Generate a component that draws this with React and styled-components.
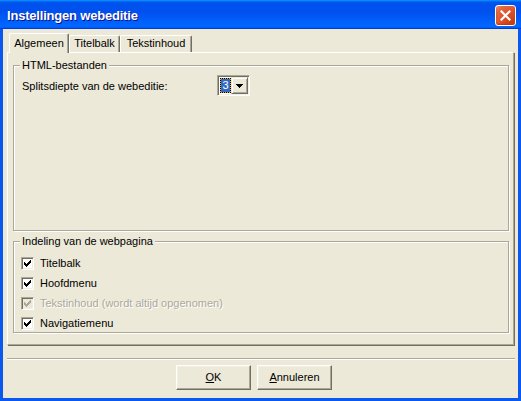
import React from "react";
import styled, { createGlobalStyle } from "styled-components";

const GlobalStyle = createGlobalStyle`
  html, body {
    margin: 0;
    padding: 0;
    background: #fff;
  }
  body {
    font-family: "Liberation Sans", Arial, sans-serif;
    font-size: 11px;
    color: #000;
  }
  * {
    box-sizing: border-box;
  }
`;

const Frame = styled.div`
  width: 521px;
  height: 401px;
  display: flex;
  flex-direction: column;
  background: #0054e3;
`;

const TitleBar = styled.div`
  height: 29px;
  flex: none;
  display: flex;
  align-items: center;
  justify-content: space-between;
  padding: 1px 5px 0 7px;
  background: linear-gradient(
    180deg,
    #0997ff,
    #0053ee 8%,
    #0050ee 40%,
    #06f 88%,
    #06f 93%,
    #005bff 95%,
    #003dd7 96%,
    #003dd7
  );
`;

const Title = styled.span`
  color: #fff;
  font-weight: bold;
  font-size: 13px;
  letter-spacing: -0.2px;
  text-shadow: 1px 1px #0f1089;
`;

const CloseButton = styled.div`
  width: 21px;
  height: 21px;
  border: 1px solid #fff;
  border-radius: 3px;
  display: flex;
  align-items: center;
  justify-content: center;
  background: radial-gradient(
    circle at 85% 85%,
    #c63f16 0%,
    #e0532a 50%,
    #e56a42 80%,
    #f3a285 100%
  );
  box-shadow: inset 0 -1px 2px #b33a10;
`;

const Client = styled.div`
  flex: 1;
  display: flex;
  flex-direction: column;
  background: #ece9d8;
  border: 3px solid #0a58ee;
  border-top: none;
  padding: 4px 4px 0 4px;
`;

const TabStrip = styled.div`
  height: 19px;
  display: flex;
  align-items: flex-start;
  padding-left: 2px;
`;

const Tab = styled.div`
  position: relative;
  z-index: ${(p) => (p.$active ? 1 : 0)};
  width: ${(p) => p.$width}px;
  height: ${(p) => (p.$active ? 20 : 17)}px;
  margin-top: ${(p) => (p.$active ? 0 : 2)}px;
  padding-top: ${(p) => (p.$active ? 3 : 1)}px;
  background: #ece9d8;
  border-top: 1px solid #fff;
  border-left: 1px solid #fff;
  border-right: 1px solid #716f64;
  border-radius: 2px 2px 0 0;
  box-shadow: inset -1px 0 #aca899;
  text-align: center;
  line-height: 13px;
`;

const Panel = styled.div`
  height: 293px;
  flex: none;
  display: flex;
  flex-direction: column;
  gap: 4px;
  padding: 6px 4px 0 5px;
  border-top: 1px solid #fff;
  border-left: 1px solid #fff;
  border-right: 1px solid #aca899;
  border-bottom: 1px solid #aca899;
  box-shadow: 1px 1px 0 #716f64;
`;

const Group = styled.fieldset`
  margin: 0;
  padding: 0;
  height: ${(p) => p.$height}px;
  border: 1px solid #aca899;
  box-shadow: inset 1px 1px 0 #fff, 1px 1px 0 #fff;
  min-width: 0;
`;

const Legend = styled.legend`
  margin-left: 6px;
  padding: 0 2px;
  line-height: 13px;
  background: #ece9d8;
`;

const SettingRow = styled.div`
  display: grid;
  grid-template-columns: 195px auto;
  align-items: center;
  padding: 3px 0 0 8px;
`;

const ComboBox = styled.div`
  width: 33px;
  height: 21px;
  display: flex;
  align-items: center;
  padding: 1px 1px 1px 2px;
  background: #fff;
  border: 1px solid;
  border-color: #aca899 #fff #fff #aca899;
  box-shadow: inset 1px 1px #716f64, inset -1px -1px #f1efe2;
`;

const ComboValue = styled.div`
  width: 11px;
  height: 15px;
  color: #fff;
  text-align: center;
  line-height: 13px;
  border: 1px dotted #000;
  background: linear-gradient(#316ac5, #316ac5) padding-box,
    linear-gradient(#e0a848, #e0a848) border-box;
`;

const DropButton = styled.div`
  width: 17px;
  height: 17px;
  display: flex;
  align-items: center;
  justify-content: center;
  background: #ece9d8;
  border: 1px solid;
  border-color: #ece9d8 #716f64 #716f64 #ece9d8;
  box-shadow: inset 1px 1px #fff, inset -1px -1px #aca899;
`;

const CheckList = styled.div`
  display: flex;
  flex-direction: column;
  padding: 5px 0 0 7px;
`;

const CheckRow = styled.div`
  height: 20px;
  display: flex;
  align-items: center;
  gap: 6px;
  color: ${(p) => (p.$disabled ? "#aca899" : "#000")};
  text-shadow: ${(p) => (p.$disabled ? "1px 1px 0 #fff" : "none")};
`;

const CheckBox = styled.div`
  width: 13px;
  height: 13px;
  flex: none;
  display: flex;
  align-items: center;
  justify-content: center;
  background: ${(p) => (p.$disabled ? "#ece9d8" : "#fff")};
  border: 1px solid;
  border-color: #aca899 #fff #fff #aca899;
  box-shadow: inset 1px 1px #716f64, inset -1px -1px #f1efe2;
`;

const Separator = styled.div`
  height: 2px;
  margin: 13px -1px 0 0;
  border-top: 1px solid #aca899;
  border-bottom: 1px solid #fff;
`;

const ButtonRow = styled.div`
  display: flex;
  gap: 6px;
  margin-top: 5px;
  padding-left: 169px;
`;

const Button = styled.div`
  width: 75px;
  height: 25px;
  display: flex;
  align-items: center;
  justify-content: center;
  background: #ece9d8;
  border: 1px solid;
  border-color: #fff #716f64 #716f64 #fff;
  box-shadow: inset -1px -1px #aca899, inset 1px 1px #f1efe2;
  line-height: 13px;
`;

const checkPath = [2, 3, 4, 3, 2, 1, 0]
  .map((y, x) => `M${x + 1} ${y + 1}h1v3h-1z`)
  .join("");

const Check = ({ color }) => (
  <svg width="9" height="9" viewBox="0 0 9 9" shapeRendering="crispEdges">
    <path d={checkPath} fill={color} />
  </svg>
);

const options = [
  { label: "Titelbalk" },
  { label: "Hoofdmenu" },
  { label: "Tekstinhoud (wordt altijd opgenomen)", disabled: true },
  { label: "Navigatiemenu" },
];

export default function App() {
  return (
    <>
      <GlobalStyle />
      <Frame>
        <TitleBar>
          <Title>Instellingen webeditie</Title>
          <CloseButton>
            <svg width="11" height="11" viewBox="0 0 11 11">
              <path
                d="M1.5 1.5L9.5 9.5M9.5 1.5L1.5 9.5"
                stroke="#fff"
                strokeWidth="2.2"
                strokeLinecap="square"
              />
            </svg>
          </CloseButton>
        </TitleBar>
        <Client>
          <TabStrip>
            <Tab $active $width={60}>Algemeen</Tab>
            <Tab $width={51}>Titelbalk</Tab>
            <Tab $width={72}>Tekstinhoud</Tab>
          </TabStrip>
          <Panel>
            <Group $height={172}>
              <Legend>HTML-bestanden</Legend>
              <SettingRow>
                <span>Splitsdiepte van de webeditie:</span>
                <ComboBox>
                  <ComboValue>3</ComboValue>
                  <DropButton>
                    <svg width="7" height="4" viewBox="0 0 7 4" shapeRendering="crispEdges">
                      <path d="M0 0h7L3.5 4z" fill="#000" />
                    </svg>
                  </DropButton>
                </ComboBox>
              </SettingRow>
            </Group>
            <Group $height={98}>
              <Legend>Indeling van de webpagina</Legend>
              <CheckList>
                {options.map((o) => (
                  <CheckRow key={o.label} $disabled={o.disabled}>
                    <CheckBox $disabled={o.disabled}>
                      <Check color={o.disabled ? "#aca899" : "#000"} />
                    </CheckBox>
                    <span>{o.label}</span>
                  </CheckRow>
                ))}
              </CheckList>
            </Group>
          </Panel>
          <Separator />
          <ButtonRow>
            <Button>
              <span>
                <u>O</u>K
              </span>
            </Button>
            <Button>
              <span>
                <u>A</u>nnuleren
              </span>
            </Button>
          </ButtonRow>
        </Client>
      </Frame>
    </>
  );
}
